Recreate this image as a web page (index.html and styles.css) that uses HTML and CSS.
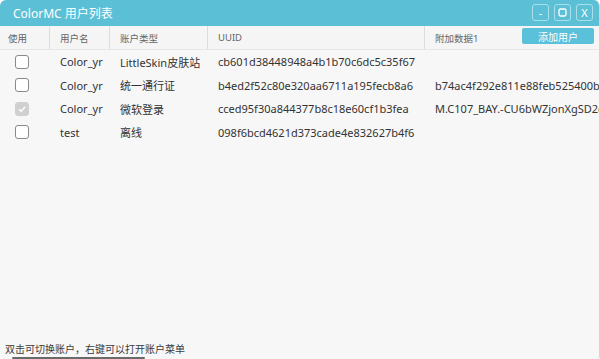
FILE: index.html
```html
<!DOCTYPE html>
<html lang="zh-CN">
<head>
  <meta charset="UTF-8">
  <title>ColorMC 用户列表</title>
  <link rel="stylesheet" href="styles.css">
</head>
<body>
  <div class="window">
    <div class="titlebar">
      <span class="title">ColorMC 用户列表</span>
      <div class="win-buttons">
        <button class="win-btn">-</button>
        <button class="win-btn">
          <svg width="9" height="9" viewBox="0 0 9 9"><rect x="1" y="1" width="7" height="7" rx="1.5" fill="none" stroke="#fff" stroke-width="1.3"/></svg>
        </button>
        <button class="win-btn">X</button>
      </div>
    </div>

    <div class="content">
      <div class="grid head">
        <div class="cell first">使用</div>
        <div class="cell">用户名</div>
        <div class="cell">账户类型</div>
        <div class="cell">UUID</div>
        <div class="cell last">附加数据1 <button class="add-btn">添加用户</button></div>
      </div>

      <div class="grid row">
        <div class="cell check"><span class="box"></span></div>
        <div class="cell">Color_yr</div>
        <div class="cell">LittleSkin皮肤站</div>
        <div class="cell">cb601d38448948a4b1b70c6dc5c35f67</div>
        <div class="cell"></div>
      </div>
      <div class="grid row">
        <div class="cell check"><span class="box"></span></div>
        <div class="cell">Color_yr</div>
        <div class="cell">统一通行证</div>
        <div class="cell">b4ed2f52c80e320aa6711a195fecb8a6</div>
        <div class="cell">b74ac4f292e811e88feb525400b59b6a</div>
      </div>
      <div class="grid row">
        <div class="cell check">
          <span class="box checked">
            <svg width="10" height="10" viewBox="0 0 10 10"><path d="M2 5.2 L4.2 7.3 L8.2 2.8" fill="none" stroke="#fff" stroke-width="1.3"/></svg>
          </span>
        </div>
        <div class="cell">Color_yr</div>
        <div class="cell">微软登录</div>
        <div class="cell">cced95f30a844377b8c18e60cf1b3fea</div>
        <div class="cell">M.C107_BAY.-CU6bWZjonXgSD2qpR7</div>
      </div>
      <div class="grid row">
        <div class="cell check"><span class="box"></span></div>
        <div class="cell">test</div>
        <div class="cell">离线</div>
        <div class="cell">098f6bcd4621d373cade4e832627b4f6</div>
        <div class="cell"></div>
      </div>
    </div>

    <div class="status">双击可切换账户，右键可以打开账户菜单</div>
    <div class="scrollbar"></div>
  </div>
</body>
</html>
```

FILE: styles.css
```css
html, body {
  margin: 0;
  height: 100%;
  background: #ffffff;
  font-family: "Noto Sans", "Noto Sans CJK SC", sans-serif;
}

.window {
  height: 359px;
  display: flex;
  flex-direction: column;
  background: #f7f7f7;
  border-radius: 6px 6px 3px 3px;
  border-right: 1px solid #d4d4d4;
  overflow: hidden;
  box-sizing: border-box;
}

.titlebar {
  height: 26px;
  flex: none;
  background: #5bbfd6;
  display: flex;
  align-items: center;
  justify-content: space-between;
  padding: 0 6px 0 13px;
}

.title {
  color: #ffffff;
  font-size: 12px;
}

.win-buttons {
  display: flex;
  gap: 5px;
  margin-top: -1px;
}

.win-btn {
  width: 17px;
  height: 17px;
  padding: 0;
  border: 1px solid #a9dfeb;
  border-radius: 3px;
  background: transparent;
  color: #ffffff;
  font-family: "Noto Sans", sans-serif;
  font-size: 11px;
  line-height: 14px;
  display: flex;
  align-items: center;
  justify-content: center;
}

.content {
  flex: 1;
  overflow: hidden;
}

.grid {
  display: grid;
  grid-template-columns: 50px 60px 98px 217px 1fr;
}

.head {
  height: 23px;
  background: #f5f5f5;
  border-bottom: 1px solid #e6e6e6;
  font-size: 9.5px;
  color: #666666;
}

.head .cell {
  border-right: 1px solid #dddddd;
  padding-left: 10px;
  display: flex;
  align-items: center;
}

.head .cell.first {
  padding-left: 8px;
}

.head .cell.last {
  border-right: none;
  justify-content: space-between;
  padding-right: 5px;
}

.add-btn {
  width: 72px;
  height: 16px;
  padding: 0;
  border: none;
  border-radius: 2px;
  background: #5bc0d9;
  color: #ffffff;
  font-family: "Noto Sans", "Noto Sans CJK SC", sans-serif;
  font-size: 10px;
  margin-top: -3px;
}

.row {
  height: 23.5px;
  font-size: 11px;
  color: #333333;
}

.row .cell {
  padding-left: 10px;
  display: flex;
  align-items: center;
  white-space: nowrap;
  overflow: hidden;
}

.row .cell.check {
  padding-left: 15px;
}

.box {
  width: 12px;
  height: 12px;
  border: 1px solid #8a8a8a;
  border-radius: 3px;
  background: #ffffff;
  display: flex;
  align-items: center;
  justify-content: center;
}

.box.checked {
  border-color: #d0d0d0;
  background: #d0d0d0;
}

.status {
  flex: none;
  font-size: 10px;
  color: #3a3a3a;
  padding: 0 0 0 5px;
  line-height: 14px;
}

.scrollbar {
  flex: none;
  width: 133px;
  height: 2px;
  margin: 1px 0 0 12px;
  background: #6a6a6a;
  border-radius: 1px;
}
```
